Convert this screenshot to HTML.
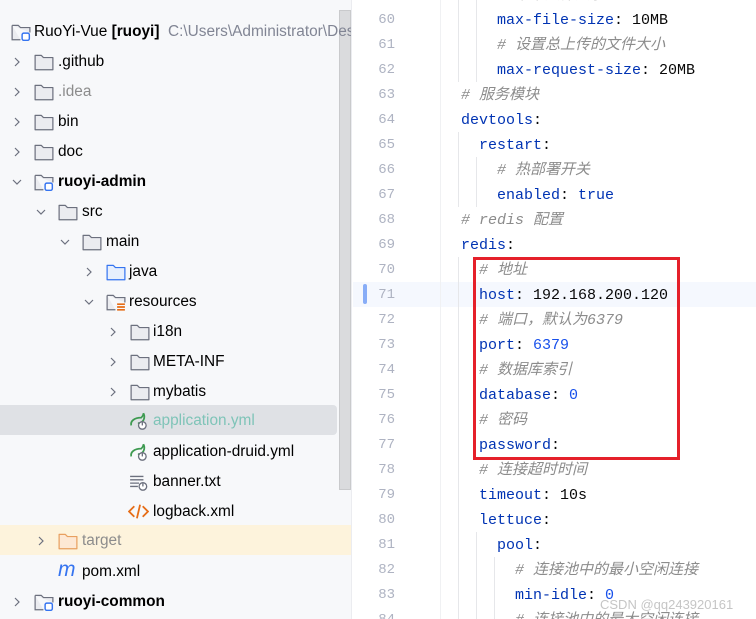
<!DOCTYPE html>
<html><head><meta charset="utf-8"><style>
*{margin:0;padding:0;box-sizing:border-box}
body{width:756px;height:619px;overflow:hidden;background:#fff;position:relative;font-family:"Liberation Sans","Noto Sans CJK SC",sans-serif}
#left{position:absolute;left:0;top:0;width:352px;height:619px;background:#f7f8fa;border-right:1px solid #ebecf0;overflow:hidden}
.row{position:absolute;left:0;height:30px;width:352px;font-size:15.4px;line-height:31px;color:#000;white-space:nowrap}
.row span.t{position:absolute;top:0}
.chev{position:absolute;top:10px;width:12px;height:12px}
.ic{position:absolute;top:7px}
#sb{position:absolute;left:339px;top:10px;width:12px;height:480px;background:#dadbdd;border:1px solid #c9cacc}
#ed{position:absolute;left:353px;top:0;width:403px;height:619px;overflow:hidden}
.ln{position:absolute;left:0;width:42px;text-align:right;font-family:"Liberation Mono",monospace;font-size:14px;color:#aeb3c2;height:25px;line-height:25px}
.cl{position:absolute;font-family:"Liberation Mono","Noto Sans CJK SC",monospace;font-size:15px;height:25px;line-height:25px;white-space:pre;color:#080808}
.k{color:#0033b3}.c{color:#8c8c8c;font-style:italic}.n{color:#1750eb}
.g{position:absolute;width:1px;background:#e6e7ea}
</style></head><body>
<div id="left">
<svg width="0" height="0" style="position:absolute"><defs>
<symbol id="fold" viewBox="0 0 18 16"><path d="M1 2h5.5l2 2H17v11H1z" fill="#ebecf0" stroke="#6c707e" stroke-width="1.1" stroke-linejoin="round"/></symbol>
<symbol id="chr" viewBox="0 0 12 12"><path d="M4 2l4 4-4 4" fill="none" stroke="#6c707e" stroke-width="1.2"/></symbol>
<symbol id="chd" viewBox="0 0 12 12"><path d="M2 4l4 4 4-4" fill="none" stroke="#6c707e" stroke-width="1.2"/></symbol>
<symbol id="mod" viewBox="0 0 18 16"><path d="M1 2h5.5l2 2H17v4.5M8.5 15H1V2" fill="#ebecf0" stroke="#6c707e" stroke-width="1.1"/><rect x="10" y="9" width="6.5" height="6.5" rx="1.5" fill="#fff" stroke="#3574f0" stroke-width="1.3"/></symbol>
<symbol id="spr" viewBox="0 0 18 16"><path d="M2 12c-1-4 3-7 9-7 1-1 2-3 2-4 2 4 0 9-5 9" fill="none" stroke="#3d9a50" stroke-width="1.6"/><circle cx="12" cy="12" r="3.4" fill="#fff" stroke="#6c707e" stroke-width="1.2"/><path d="M12 9.3v2.7" stroke="#6c707e" stroke-width="1.2"/></symbol>
</defs></svg>
<div id="sb"></div>
<div class="row" style="top:16px"><svg class="ic" style="left:11px" width="20" height="18"><use href="#mod"/></svg><span class="t" style="left:34px">RuoYi-Vue <b>[ruoyi]</b> <span style="color:#818594">&nbsp;C:\Users\Administrator\Desktop</span></span></div>
<div class="row" style="top:46px"><svg class="chev" style="left:11px"><use href="#chr"/></svg><svg class="ic" style="left:34px" width="20" height="18"><use href="#fold"/></svg><span class="t" style="left:58px">.github</span></div>
<div class="row" style="top:76px"><svg class="chev" style="left:11px"><use href="#chr"/></svg><svg class="ic" style="left:34px" width="20" height="18"><use href="#fold"/></svg><span class="t" style="left:58px;color:#8c8c8c">.idea</span></div>
<div class="row" style="top:106px"><svg class="chev" style="left:11px"><use href="#chr"/></svg><svg class="ic" style="left:34px" width="20" height="18"><use href="#fold"/></svg><span class="t" style="left:58px">bin</span></div>
<div class="row" style="top:136px"><svg class="chev" style="left:11px"><use href="#chr"/></svg><svg class="ic" style="left:34px" width="20" height="18"><use href="#fold"/></svg><span class="t" style="left:58px">doc</span></div>
<div class="row" style="top:166px"><svg class="chev" style="left:11px"><use href="#chd"/></svg><svg class="ic" style="left:34px" width="20" height="18"><use href="#mod"/></svg><span class="t" style="left:58px;font-weight:bold">ruoyi-admin</span></div>
<div class="row" style="top:196px"><svg class="chev" style="left:35px"><use href="#chd"/></svg><svg class="ic" style="left:58px" width="20" height="18"><use href="#fold"/></svg><span class="t" style="left:82px">src</span></div>
<div class="row" style="top:226px"><svg class="chev" style="left:59px"><use href="#chd"/></svg><svg class="ic" style="left:82px" width="20" height="18"><use href="#fold"/></svg><span class="t" style="left:106px">main</span></div>
<div class="row" style="top:256px"><svg class="chev" style="left:83px"><use href="#chr"/></svg><svg class="ic" style="left:106px" width="20" height="18" viewBox="0 0 18 16"><path d="M1 2h5.5l2 2H17v11H1z" fill="#e7effd" stroke="#3574f0" stroke-width="1.1" stroke-linejoin="round"/></svg><span class="t" style="left:129px">java</span></div>
<div class="row" style="top:286px"><svg class="chev" style="left:83px"><use href="#chd"/></svg><svg class="ic" style="left:106px" width="20" height="18" viewBox="0 0 18 16"><path d="M1 2h5.5l2 2H17v4.5M8.5 15H1V2" fill="#ebecf0" stroke="#6c707e" stroke-width="1.1"/><path d="M10 10h7M10 12.5h7M10 15h7" stroke="#e66d17" stroke-width="1.5"/></svg><span class="t" style="left:129px">resources</span></div>
<div class="row" style="top:316px"><svg class="chev" style="left:107px"><use href="#chr"/></svg><svg class="ic" style="left:130px" width="20" height="18"><use href="#fold"/></svg><span class="t" style="left:153px">i18n</span></div>
<div class="row" style="top:346px"><svg class="chev" style="left:107px"><use href="#chr"/></svg><svg class="ic" style="left:130px" width="20" height="18"><use href="#fold"/></svg><span class="t" style="left:153px">META-INF</span></div>
<div class="row" style="top:376px"><svg class="chev" style="left:107px"><use href="#chr"/></svg><svg class="ic" style="left:130px" width="20" height="18"><use href="#fold"/></svg><span class="t" style="left:153px">mybatis</span></div>
<div class="row" style="top:405px;height:30px;width:337px;background:#dfe1e5;border-radius:0 4px 4px 0"><svg class="ic" style="left:129px" width="20" height="18"><use href="#spr"/></svg><span class="t" style="left:153px;color:#7fc4b8">application.yml</span></div>
<div class="row" style="top:436px"><svg class="ic" style="left:129px" width="20" height="18"><use href="#spr"/></svg><span class="t" style="left:153px">application-druid.yml</span></div>
<div class="row" style="top:466px"><svg class="ic" style="left:129px" width="20" height="18" viewBox="0 0 18 16"><path d="M1 3h12M1 6h12M1 9h8M1 12h7" stroke="#6c707e" stroke-width="1.2"/><circle cx="12.5" cy="12" r="3.4" fill="#fff" stroke="#6c707e" stroke-width="1.2"/><path d="M12.5 9.3v2.7" stroke="#6c707e" stroke-width="1.2"/></svg><span class="t" style="left:153px">banner.txt</span></div>
<div class="row" style="top:496px"><svg class="ic" style="left:128px" width="21" height="17" viewBox="0 0 20 16"><path d="M6 3L1 8l5 5M14 3l5 5-5 5M11.5 1.5l-3 13" fill="none" stroke="#e66d17" stroke-width="1.7"/></svg><span class="t" style="left:153px">logback.xml</span></div>
<div class="row" style="top:525px;background:#fdf3dc"><svg class="chev" style="left:35px"><use href="#chr"/></svg><svg class="ic" style="left:58px" width="20" height="18" viewBox="0 0 18 16"><path d="M1 2h5.5l2 2H17v11H1z" fill="#fde8d4" stroke="#e8a060" stroke-width="1.1" stroke-linejoin="round"/></svg><span class="t" style="left:82px;color:#8c8c8c">target</span></div>
<div class="row" style="top:556px"><span class="t" style="left:58px;color:#3574f0;font-style:italic;font-size:21px;line-height:28px">m</span><span class="t" style="left:82px">pom.xml</span></div>
<div class="row" style="top:586px"><svg class="chev" style="left:11px"><use href="#chr"/></svg><svg class="ic" style="left:34px" width="20" height="18"><use href="#mod"/></svg><span class="t" style="left:58px;font-weight:bold">ruoyi-common</span></div>
</div>
<div id="ed">
<div style="position:absolute;left:0;top:282px;width:403px;height:25px;background:#f5f8fe"></div>
<div style="position:absolute;left:10px;top:284px;width:4px;height:20px;border-radius:2px;background:#88adf7"></div>
<div class="g" style="left:87px;top:0;height:619px;background:#f0f1f3"></div>
<div class="g" style="left:105px;top:0;height:82px"></div>
<div class="g" style="left:123px;top:0;height:82px"></div>
<div class="g" style="left:105px;top:132px;height:75px"></div>
<div class="g" style="left:123px;top:157px;height:50px"></div>
<div class="g" style="left:105px;top:257px;height:362px"></div>
<div class="g" style="left:123px;top:532px;height:87px"></div>
<div class="g" style="left:141px;top:557px;height:62px"></div>
<div id="lines"></div>
<div style="position:absolute;left:120px;top:257px;width:207px;height:203px;border:3px solid #e5202a"></div>
</div>
<div style="position:absolute;left:600px;top:597px;font-size:13px;color:rgba(150,150,150,0.55)">CSDN @qq243920161</div>
<script>
var L=[[59,2,'<span class="c"># 单个文件大小</span>'],[60,2,'<span class="k">max-file-size</span>: 10MB'],[61,2,'<span class="c"># 设置总上传的文件大小</span>'],[62,2,'<span class="k">max-request-size</span>: 20MB'],[63,0,'<span class="c"># 服务模块</span>'],[64,0,'<span class="k">devtools</span>:'],[65,1,'<span class="k">restart</span>:'],[66,2,'<span class="c"># 热部署开关</span>'],[67,2,'<span class="k">enabled</span>: <span class="k">true</span>'],[68,0,'<span class="c"># redis 配置</span>'],[69,0,'<span class="k">redis</span>:'],[70,1,'<span class="c"># 地址</span>'],[71,1,'<span class="k">host</span>: 192.168.200.120'],[72,1,'<span class="c"># 端口，默认为6379</span>'],[73,1,'<span class="k">port</span>: <span class="n">6379</span>'],[74,1,'<span class="c"># 数据库索引</span>'],[75,1,'<span class="k">database</span>: <span class="n">0</span>'],[76,1,'<span class="c"># 密码</span>'],[77,1,'<span class="k">password</span>:'],[78,1,'<span class="c"># 连接超时时间</span>'],[79,1,'<span class="k">timeout</span>: 10s'],[80,1,'<span class="k">lettuce</span>:'],[81,2,'<span class="k">pool</span>:'],[82,3,'<span class="c"># 连接池中的最小空闲连接</span>'],[83,3,'<span class="k">min-idle</span>: <span class="n">0</span>'],[84,3,'<span class="c"># 连接池中的最大空闲连接</span>']];
var h='';L.forEach(function(l){var y=8+(l[0]-60)*25;if(l[0]!=59)h+='<div class="ln" style="top:'+y+'px">'+l[0]+'</div>';h+='<div class="cl" style="top:'+y+'px;left:'+(108+l[1]*18)+'px">'+l[2]+'</div>';});
document.getElementById('lines').innerHTML=h;
</script>
</body></html>
